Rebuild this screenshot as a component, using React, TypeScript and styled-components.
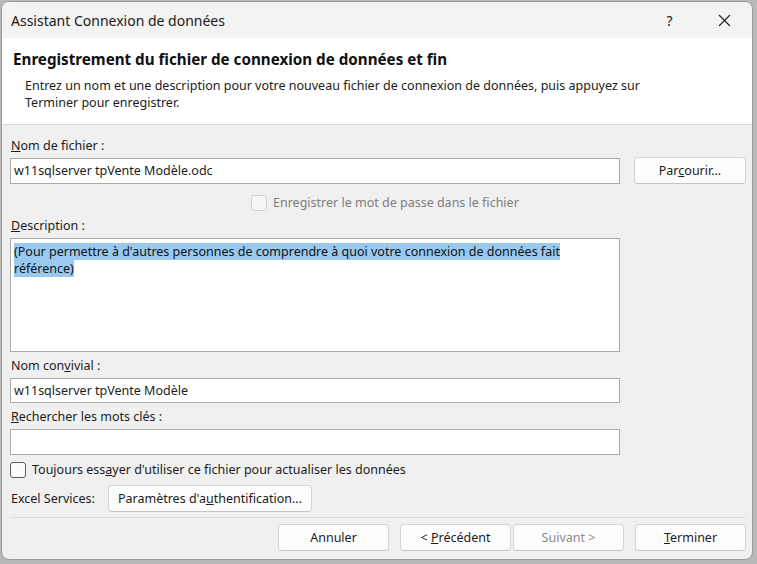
import styled, { createGlobalStyle } from 'styled-components'

const GlobalStyle = createGlobalStyle`
  body {
    margin: 0;
    background: #b9b9b9;
    font-family: "Noto Sans", "Open Sans", sans-serif;
    font-size: 12.5px;
    color: #1b1b1b;
  }
`

const Page = styled.div`
  width: 757px;
  height: 564px;
  padding: 1px 0 0 1px;
  box-sizing: border-box;
`

const Window = styled.div`
  width: 752px;
  height: 559px;
  box-sizing: border-box;
  border: 1px solid #9a9a9a;
  border-radius: 8px;
  background: #f0f0f0;
  overflow: hidden;
  display: flex;
  flex-direction: column;
`

const TitleBar = styled.div`
  height: 36px;
  display: flex;
  align-items: center;
  background: #f3f3f3;
  flex-shrink: 0;
`

const Title = styled.div`
  flex: 1;
  padding-left: 9px;
  font-size: 14px;
  color: #1a1a1a;
`

const CaptionButton = styled.div`
  width: 55px;
  height: 36px;
  display: flex;
  align-items: center;
  justify-content: center;
  font-size: 14px;
  color: #222;
`

const Header = styled.div`
  background: #fff;
  height: 87px;
  border-bottom: 1px solid #dadada;
  padding: 11px 0 0 11px;
  box-sizing: border-box;
  flex-shrink: 0;
`

const Heading = styled.div`
  font-weight: 700;
  font-size: 15.2px;
  color: #111;
  line-height: 20px;
`

const Intro = styled.div`
  margin: 8px 0 0 12px;
  width: 680px;
  line-height: 17px;
  color: #1b1b1b;
`

const Body = styled.div`
  padding: 0 6px 0 8px;
  display: flex;
  flex-direction: column;
`

const Label = styled.div<{ $top: number; $w?: number }>`
  margin-top: ${p => p.$top}px;
  padding-left: 1px;
  line-height: 16px;
  ${p => (p.$w ? `width: ${p.$w}px;` : '')}
`

const Row = styled.div<{ $top: number; $indent?: number }>`
  display: flex;
  align-items: center;
  margin-top: ${p => p.$top}px;
  padding-left: ${p => p.$indent ?? 0}px;
`

const Field = styled.div<{ $h: number }>`
  width: 610px;
  height: ${p => p.$h}px;
  box-sizing: border-box;
  border: 1px solid #a9a9a9;
  background: #fff;
  padding: 0 3px;
  display: flex;
  align-items: center;
  color: #1b1b1b;
`

const TextArea = styled.div`
  width: 610px;
  height: 114px;
  box-sizing: border-box;
  border: 1px solid #a9a9a9;
  background: #fff;
  padding: 4px 3px;
  line-height: 17px;
  color: #111;
`

const Selected = styled.span`
  background: #99c9ef;
`

const Button = styled.div<{ $w: number; $disabled?: boolean }>`
  width: ${p => p.$w}px;
  height: 27px;
  box-sizing: border-box;
  border: 1px solid #d4d4d4;
  border-bottom-color: #c4c4c4;
  border-radius: 4px;
  background: #fdfdfd;
  display: flex;
  align-items: center;
  justify-content: center;
  color: ${p => (p.$disabled ? '#8a8a8a' : '#1b1b1b')};
`

const Check = styled.div<{ $disabled?: boolean }>`
  width: 14px;
  height: 14px;
  border: 1px solid ${p => (p.$disabled ? '#cfcfcf' : '#5c5c5c')};
  border-radius: 3px;
  background: ${p => (p.$disabled ? '#f7f7f7' : '#fbfbfb')};
  margin-right: 6px;
`

const CheckText = styled.span<{ $disabled?: boolean }>`
  color: ${p => (p.$disabled ? '#7d7d7d' : '#1b1b1b')};
`

const Separator = styled.div`
  height: 1px;
  background: #dcdcdc;
  margin: 5px 0 0 0;
`

const Footer = styled.div`
  display: flex;
  justify-content: flex-end;
  margin-top: 6px;
`

const Gap = styled.div<{ $w: number }>`
  width: ${p => p.$w}px;
`

export default function App() {
  return (
    <Page>
      <GlobalStyle />
      <Window>
        <TitleBar>
          <Title>Assistant Connexion de données</Title>
          <CaptionButton>?</CaptionButton>
          <CaptionButton>
            <svg width="13" height="13" viewBox="0 0 13 13">
              <path d="M1 1 L12 12 M12 1 L1 12" stroke="#222" strokeWidth="1.1" />
            </svg>
          </CaptionButton>
        </TitleBar>
        <Header>
          <Heading>Enregistrement du fichier de connexion de données et fin</Heading>
          <Intro>
            Entrez un nom et une description pour votre nouveau fichier de connexion de données, puis appuyez sur
            <br />
            Terminer pour enregistrer.
          </Intro>
        </Header>
        <Body>
          <Label $top={13}><u>N</u>om de fichier :</Label>
          <Row $top={3}>
            <Field $h={26}>w11sqlserver tpVente Modèle.odc</Field>
            <Gap $w={14} />
            <Button $w={112}><span>Par<u>c</u>ourir...</span></Button>
          </Row>
          <Row $top={10} $indent={241}>
            <Check $disabled />
            <CheckText $disabled>Enregistrer le mot de passe dans le fichier</CheckText>
          </Row>
          <Label $top={7}><u>D</u>escription :</Label>
          <Row $top={4}>
            <TextArea>
              <Selected>
                (Pour permettre à d'autres personnes de comprendre à quoi votre connexion de données fait
              </Selected>
              <br />
              <Selected>référence)</Selected>
            </TextArea>
          </Row>
          <Label $top={6}>Nom con<u>v</u>ivial :</Label>
          <Row $top={4}>
            <Field $h={25}>w11sqlserver tpVente Modèle</Field>
          </Row>
          <Label $top={6}><u>R</u>echercher les mots clés :</Label>
          <Row $top={4}>
            <Field $h={26} />
          </Row>
          <Row $top={6}>
            <Check />
            <CheckText>Toujours ess<u>a</u>yer d'utiliser ce fichier pour actualiser les données</CheckText>
          </Row>
          <Row $top={7}>
            <Label $top={0} $w={97}>Excel Services:</Label>
            <Button $w={204}><span>Paramètres d'a<u>u</u>thentification...</span></Button>
          </Row>
          <Separator />
          <Footer>
            <Button $w={111}>Annuler</Button>
            <Gap $w={11} />
            <Button $w={111}><span>&lt; <u>P</u>récédent</span></Button>
            <Gap $w={2} />
            <Button $w={111} $disabled>Suivant &gt;</Button>
            <Gap $w={11} />
            <Button $w={111}><span><u>T</u>erminer</span></Button>
          </Footer>
        </Body>
      </Window>
    </Page>
  )
}
